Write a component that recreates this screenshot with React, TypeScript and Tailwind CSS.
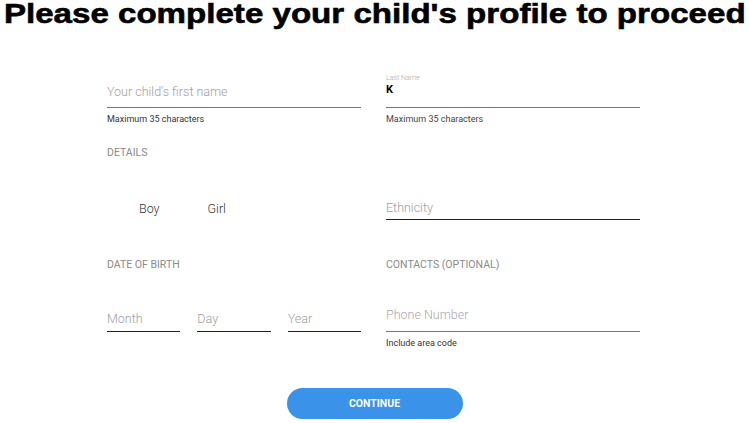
export default function App() {
  return (
    <div className="w-[749px] h-[423px] bg-white overflow-hidden font-['Roboto',sans-serif]">
      <div className="h-[28px] flex justify-center">
        <h1 className="inline-block whitespace-nowrap scale-x-[1.182] text-[28px] leading-[28px] font-bold text-black font-['Liberation_Sans',Arial,sans-serif] [-webkit-text-stroke:0.6px_black]">
          Please complete your child's profile to proceed
        </h1>
      </div>

      <div className="ml-[107px] w-[533px] mt-[44px] text-[#9e9e9e] font-light">
        {/* names */}
        <div className="flex gap-[25px]">
          <div className="w-[254px]">
            <div className="h-[12px]" />
            <div className="h-[24px] border-b border-[#757575] flex items-center pb-[6px] text-[12.5px]">
              Your child's first name
            </div>
            <div className="mt-[5px] text-[9px] leading-[12px] text-[#333] font-normal">Maximum 35 characters</div>
          </div>
          <div className="w-[254px]">
            <div className="h-[12px] text-[7px] leading-[12px] text-[#aaa]">Last Name</div>
            <div className="h-[24px] border-b border-[#757575] flex items-center pb-[10px] text-[11px] font-bold text-black">
              K
            </div>
            <div className="mt-[5px] text-[9px] leading-[12px] text-[#444] font-normal">Maximum 35 characters</div>
          </div>
        </div>

        {/* details */}
        <div className="mt-[22px] h-[12px] text-[10.5px] leading-[12px] text-[#8a8a8a] font-normal">DETAILS</div>
        <div className="mt-[39px] flex gap-[25px]">
          <div className="w-[254px] h-[22px] flex items-center pl-[32px] gap-[48px] text-[12.5px] text-[#333]">
            <span>Boy</span>
            <span>Girl</span>
          </div>
          <div className="w-[254px] h-[22px] border-b border-[#222] flex items-center text-[12.5px]">
            Ethnicity
          </div>
        </div>

        {/* dob / contacts */}
        <div className="mt-[39px] flex gap-[25px] text-[10.5px] leading-[12px] text-[#8a8a8a] font-normal">
          <div className="w-[254px]">DATE OF BIRTH</div>
          <div className="w-[254px]">CONTACTS (OPTIONAL)</div>
        </div>
        <div className="mt-[37px] flex gap-[25px] items-start">
          <div className="w-[254px] flex gap-[17px]">
            {["Month", "Day", "Year"].map((t) => (
              <div key={t} className="flex-1 h-[24px] border-b border-[#222] flex items-center text-[12.5px]">
                {t}
              </div>
            ))}
          </div>
          <div className="w-[254px]">
            <div className="h-[24px] border-b border-[#757575] flex items-center pb-[8px] text-[12.5px] text-[#aaa]">
              Phone Number
            </div>
            <div className="mt-[5px] text-[9px] leading-[12px] text-[#333] font-normal">Include area code</div>
          </div>
        </div>
      </div>

      <div className="mt-[39px] flex justify-center">
        <button className="w-[176px] h-[31px] rounded-full bg-[#3b92e9] text-white text-[10.5px] font-bold">
          CONTINUE
        </button>
      </div>
    </div>
  );
}
